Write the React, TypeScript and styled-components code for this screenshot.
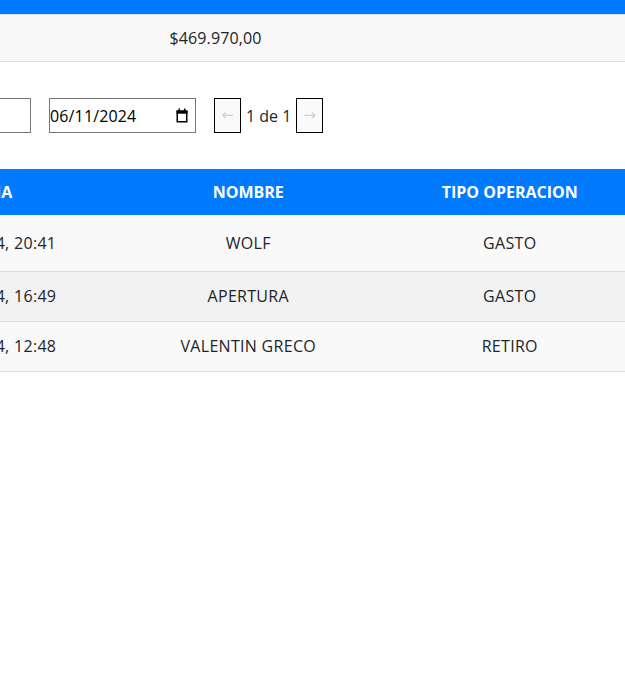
import React, { useLayoutEffect, useRef } from "react";
import styled, { createGlobalStyle } from "styled-components";

const GlobalStyle = createGlobalStyle`
  html, body { margin: 0; padding: 0; background: #fff; }
  body {
    font-family: "Open Sans", "Liberation Sans", sans-serif;
    font-size: 16px;
    color: #212529;
  }
  * { box-sizing: border-box; }
`;

const Viewport = styled.div`
  width: 100vw;
  height: 100vh;
  overflow: hidden;
`;

const Page = styled.main`
  width: 785px;
`;

const SummaryHead = styled.div`
  height: 14px;
  background: #007bff;
`;

const SummaryRow = styled.div`
  display: grid;
  grid-template-columns: 240px 239px 1fr;
  background: #f8f8f8;
  border-top: 1px solid #ddd;
  border-bottom: 1px solid #ddd;
`;

const SummaryCell = styled.div`
  height: 46px;
  display: flex;
  align-items: center;
  justify-content: center;
  line-height: 22px;
  letter-spacing: 0.1px;
`;

const Filters = styled.div`
  display: flex;
  align-items: stretch;
  gap: 18px;
  height: 35px;
  margin: 36px 0;
  padding-left: 28px;
`;

const TextField = styled.input`
  width: 147px;
  height: 35px;
  border: 1px solid #767676;
  border-radius: 0;
  padding: 0 1px;
  font-family: "Open Sans", sans-serif;
  font-size: 16px;
  color: #000;
  background: #fff;
`;

const DateField = styled.label`
  width: 147px;
  height: 35px;
  display: flex;
  align-items: center;
  border: 1px solid #767676;
  padding: 0 7px 0 0;
  background: #fff;
`;

const DateText = styled.input`
  flex: 1;
  min-width: 0;
  border: none;
  outline: none;
  padding: 0;
  background: transparent;
  font-family: "Open Sans", sans-serif;
  font-size: 16px;
  letter-spacing: 0.15px;
  color: #000;
`;

const Pager = styled.div`
  display: flex;
  align-items: center;
  gap: 5px;
`;

const PageButton = styled.button`
  width: 27px;
  height: 35px;
  padding: 0;
  border: 1px solid #000;
  border-radius: 0;
  background: #fafafa;
  color: #cfcfcf;
  font-family: "DejaVu Sans", "Liberation Sans", sans-serif;
  font-size: 15px;
  line-height: 1;
  display: flex;
  align-items: center;
  justify-content: center;
`;

const PageInfo = styled.span`
  line-height: 22px;
`;

const Table = styled.div`
  width: 784.5px;
`;

const HeaderRow = styled.div`
  display: grid;
  grid-template-columns: repeat(3, 1fr);
  height: 46px;
  background: #007bff;
  color: #fff;
  font-weight: 700;
`;

const Row = styled.div<{ $alt?: boolean; $tall?: boolean }>`
  display: grid;
  grid-template-columns: repeat(3, 1fr);
  height: ${(p) => (p.$tall ? 57 : 50)}px;
  padding-bottom: ${(p) => (p.$tall ? 0 : 1)}px;
  background: ${(p) => (p.$alt ? "#f2f2f2" : "#f9f9f9")};
  border-bottom: 1px solid #ddd;
  letter-spacing: 0.3px;
`;

const Cell = styled.div`
  display: flex;
  align-items: center;
  justify-content: center;
  white-space: nowrap;
  line-height: 22px;
`;

const CalendarIcon = () => (
  <svg width="12" height="15" viewBox="0 0 12 15" aria-hidden="true">
    <rect x="2.5" y="0.5" width="1.6" height="3" fill="#000" />
    <rect x="7.9" y="0.5" width="1.6" height="3" fill="#000" />
    <rect x="0.5" y="2.5" width="11" height="3.2" fill="#000" />
    <rect x="1.25" y="3.25" width="9.5" height="10.5" fill="none" stroke="#000" strokeWidth="1.5" />
  </svg>
);

const rows = [
  { fecha: "06/11/2024, 20:41", nombre: "WOLF", tipo: "GASTO" },
  { fecha: "06/11/2024, 16:49", nombre: "APERTURA", tipo: "GASTO" },
  { fecha: "06/11/2024, 12:48", nombre: "VALENTIN GRECO", tipo: "RETIRO" },
];

export default function App() {
  const viewRef = useRef<HTMLDivElement>(null);

  useLayoutEffect(() => {
    if (viewRef.current) viewRef.current.scrollLeft = 144;
  }, []);

  return (
    <>
      <GlobalStyle />
      <Viewport ref={viewRef}>
        <Page>
          <SummaryHead />
          <SummaryRow>
            <SummaryCell />
            <SummaryCell>$469.970,00</SummaryCell>
            <SummaryCell />
          </SummaryRow>

          <Filters>
            <TextField type="text" aria-label="Desde" />
            <DateField>
              <DateText type="text" defaultValue="06/11/2024" aria-label="Hasta" />
              <CalendarIcon />
            </DateField>
            <Pager>
              <PageButton disabled aria-label="Anterior">←</PageButton>
              <PageInfo>1 de 1</PageInfo>
              <PageButton disabled aria-label="Siguiente">→</PageButton>
            </Pager>
          </Filters>

          <Table>
            <HeaderRow>
              <Cell>FECHA</Cell>
              <Cell>NOMBRE</Cell>
              <Cell>TIPO OPERACION</Cell>
            </HeaderRow>
            {rows.map((r, i) => (
              <Row key={i} $alt={i % 2 === 1} $tall={i === 0}>
                <Cell>{r.fecha}</Cell>
                <Cell>{r.nombre}</Cell>
                <Cell>{r.tipo}</Cell>
              </Row>
            ))}
          </Table>
        </Page>
      </Viewport>
    </>
  );
}
